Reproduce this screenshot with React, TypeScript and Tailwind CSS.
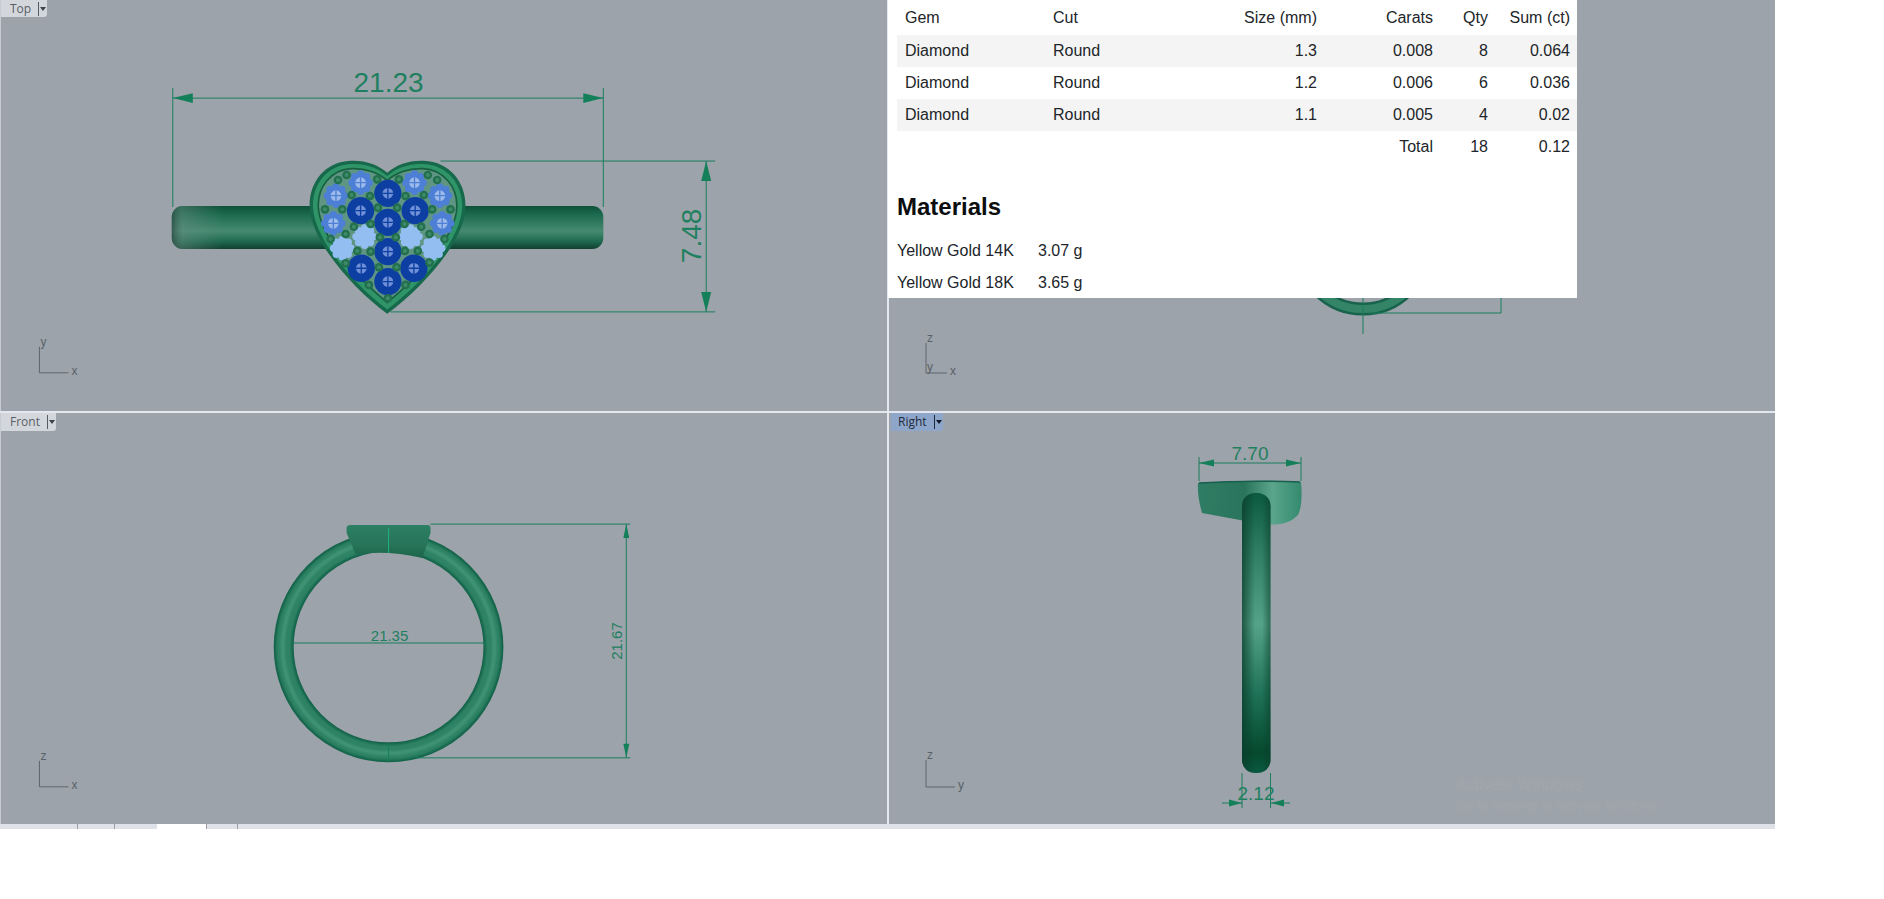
const DIM = '#1a7d5c';

const DARK_GEMS = [[292, 160], [210, 212], [374, 212], [292, 247], [292, 335], [212, 385], [370, 385], [292, 425]];
const MID_GEMS = [[210, 128], [372, 128], [136, 167], [448, 167], [128, 250], [455, 250]];
const LIGHT_GEMS = [[222, 290], [360, 290], [155, 325], [428, 325]];
const BEADS = [
    [142, 120], [168, 105], [260, 118], [325, 118], [412, 105], [440, 120], [183, 165], [238, 168], [345, 168], [400, 165],
    [103, 208], [155, 208], [262, 203], [320, 203], [425, 208], [480, 208], [190, 260], [240, 252], [342, 252], [392, 260],
    [120, 297], [165, 282], [417, 282], [462, 297], [268, 292], [316, 292], [200, 333], [240, 335], [343, 333], [382, 333],
    [165, 370], [417, 368], [265, 382], [318, 382], [235, 435], [345, 435], [292, 475]
];
const BUMPS = [[26, 0], [18, 18], [0, 26], [-18, 18], [-26, 0], [-18, -18], [0, -26], [18, -18]];

const GEMS = [
    { gem: 'Diamond', cut: 'Round', size: '1.3', carats: '0.008', qty: '8', sum: '0.064' },
    { gem: 'Diamond', cut: 'Round', size: '1.2', carats: '0.006', qty: '6', sum: '0.036' },
    { gem: 'Diamond', cut: 'Round', size: '1.1', carats: '0.005', qty: '4', sum: '0.02' }
];

function Line({ x1, y1, x2, y2 }: { x1: number; y1: number; x2: number; y2: number }) {
    return <line x1={x1} y1={y1} x2={x2} y2={y2} stroke={DIM} strokeWidth={1} />;
}

// arrow with its tip on (x, y), pointing along (dx, dy)
function Arrow({ x, y, dx, dy, len, half }: { x: number; y: number; dx: number; dy: number; len: number; half: number }) {
    const bx = x - dx * len;
    const by = y - dy * len;
    const pts = `${x},${y} ${bx - dy * half},${by - dx * half} ${bx + dy * half},${by + dx * half}`;
    return <polygon points={pts} fill="#14805a" />;
}

function Axis({ x, y, h, w, v, u, extra }: { x: number; y: number; h: number; w: number; v: string; u: string; extra?: string }) {
    return (
        <g>
            <path d={`M${x} ${y - h}V${y}H${x + w}`} fill="none" stroke="#5f666c" strokeWidth={1} />
            <text x={x + 1} y={y - h - 1} fontSize={12} fill="#5a6168">{v}</text>
            <text x={x + w + 3} y={y + 2} fontSize={12} fill="#5a6168">{u}</text>
            {extra && <text x={x + 1} y={y - 2} fontSize={12} fill="#5a6168">{extra}</text>}
        </g>
    );
}

function Gem({ x, y, fill, mark, scallop }: { x: number; y: number; fill: string; mark?: string; scallop?: boolean }) {
    return (
        <g>
            <circle cx={x} cy={y} r={scallop ? 30 : 41} fill={fill} />
            {scallop && BUMPS.map(([dx, dy]) => <circle key={`${dx}/${dy}`} cx={x + dx} cy={y + dy} r={11} fill={fill} />)}
            {mark && <circle cx={x} cy={y} r={16} fill={mark} />}
            {mark && <path d={`M${x - 16} ${y}H${x + 16}M${x} ${y - 16}V${y + 16}`} stroke={fill} strokeWidth={4} />}
        </g>
    );
}

function Heart() {
    const outer = 'M290 98C265 75 225 60 180 62C100 65 55 130 57 200C60 300 180 440 290 522C400 440 525 300 525 200C527 130 480 65 400 62C355 60 315 75 290 98Z';
    const middle = 'M290 108C265 85 225 70 181 72C108 75 65 135 67 200C70 295 185 430 290 509C395 430 515 295 515 200C517 135 472 75 399 72C355 70 315 85 290 108Z';
    const inner = 'M290 122C265 99 225 84 183 86C120 89 81 142 83 200C86 285 195 410 290 488C385 410 499 285 499 200C501 142 460 89 397 86C355 84 315 99 290 122Z';
    return (
        <g transform="translate(290 140) scale(0.3333)">
            <path d={outer} fill="#16694a" />
            <path d={middle} fill="#2f9468" />
            <path d={inner} fill="#5f9583" stroke="#17603f" strokeWidth={5} />
            {MID_GEMS.map(([x, y]) => <Gem key={`${x}-${y}`} x={x} y={y} fill="#4d7fd6" mark="#9dbbea" scallop />)}
            {LIGHT_GEMS.map(([x, y]) => <Gem key={`${x}-${y}`} x={x} y={y} fill="#93bef2" scallop />)}
            {DARK_GEMS.map(([x, y]) => <Gem key={`${x}-${y}`} x={x} y={y} fill="#0d3fa3" mark="#7090d8" />)}
            {BEADS.map(([x, y]) => (
                <g key={`${x}-${y}`}>
                    <circle cx={x} cy={y} r={13} fill="#22704e" />
                    <circle cx={x} cy={y} r={6} fill="#3f8a68" />
                </g>
            ))}
        </g>
    );
}

function Defs() {
    return (
        <svg width="0" height="0" className="absolute">
            <defs>
                <linearGradient id="band" x1="0" y1="0" x2="0" y2="1">
                    <stop offset="0" stopColor="#0c5138" />
                    <stop offset="0.2" stopColor="#1c6a4f" />
                    <stop offset="0.58" stopColor="#458a71" />
                    <stop offset="0.82" stopColor="#1f6a50" />
                    <stop offset="1" stopColor="#0f4030" />
                </linearGradient>
                <linearGradient id="bandEnd" x1="0" y1="0" x2="1" y2="0">
                    <stop offset="0" stopColor="#2f4f46" stopOpacity="0.8" />
                    <stop offset="0.025" stopColor="#6b8f84" stopOpacity="0.45" />
                    <stop offset="0.12" stopColor="#6b8f84" stopOpacity="0" />
                    <stop offset="1" stopColor="#6b8f84" stopOpacity="0" />
                </linearGradient>
                <linearGradient id="shank" x1="0" y1="0" x2="1" y2="0">
                    <stop offset="0" stopColor="#0a3d2c" stopOpacity="0.75" />
                    <stop offset="0.45" stopColor="#0a3d2c" stopOpacity="0" />
                    <stop offset="0.7" stopColor="#0a3d2c" stopOpacity="0" />
                    <stop offset="1" stopColor="#0a3d2c" stopOpacity="0.55" />
                </linearGradient>
                <linearGradient id="shankV" x1="0" y1="0" x2="0" y2="1">
                    <stop offset="0" stopColor="#0b5a40" />
                    <stop offset="0.2" stopColor="#2e7c62" />
                    <stop offset="0.47" stopColor="#55a388" />
                    <stop offset="0.72" stopColor="#1e7257" />
                    <stop offset="0.93" stopColor="#05492e" />
                    <stop offset="1" stopColor="#0a5a42" />
                </linearGradient>
                <linearGradient id="head" x1="0" y1="0" x2="1" y2="0">
                    <stop offset="0" stopColor="#2f7d64" />
                    <stop offset="0.45" stopColor="#2a745c" />
                    <stop offset="0.72" stopColor="#5aa58c" />
                    <stop offset="1" stopColor="#338a6e" />
                </linearGradient>
                <linearGradient id="seat" x1="0" y1="0" x2="0" y2="1">
                    <stop offset="0" stopColor="#2c7f62" />
                    <stop offset="0.6" stopColor="#27745a" />
                    <stop offset="1" stopColor="#1c6549" />
                </linearGradient>
                <filter id="soft" x="-10%" y="-10%" width="120%" height="120%">
                    <feGaussianBlur stdDeviation="1.1" />
                </filter>
            </defs>
        </svg>
    );
}

function TopView() {
    return (
        <svg viewBox="0 0 887 411" className="w-full h-full font-['Liberation_Sans']">
            <rect x={171} y={206} width={432} height={43} rx={11} fill="url(#band)" />
            <rect x={171} y={206} width={432} height={43} rx={11} fill="url(#bandEnd)" />
            <Line x1={172} y1={88} x2={172} y2={207} />
            <Line x1={603} y1={88} x2={603} y2={207} />
            <Line x1={172} y1={98} x2={603} y2={98} />
            <Arrow x={172} y={98} dx={-1} dy={0} len={20} half={5} />
            <Arrow x={603} y={98} dx={1} dy={0} len={20} half={5} />
            <text x={388} y={92} textAnchor="middle" fontSize={28} fill="#1f8060">21.23</text>
            <Line x1={440} y1={161} x2={715} y2={161} />
            <Line x1={390} y1={312} x2={715} y2={312} />
            <Line x1={706} y1={161} x2={706} y2={312} />
            <Arrow x={706} y={161} dx={0} dy={-1} len={20} half={5} />
            <Arrow x={706} y={312} dx={0} dy={1} len={20} half={5} />
            <text transform="translate(701 236) rotate(-90)" textAnchor="middle" fontSize={28} fill="#1f8060">7.48</text>
            <Heart />
            <Axis x={38.5} y={373} h={26} w={29} v="y" u="x" />
        </svg>
    );
}

function TopRightView() {
    return (
        <svg viewBox="889 0 886 411" className="w-full h-full font-['Liberation_Sans']">
            <circle cx={1363} cy={246} r={63} fill="none" stroke="#17634b" strokeWidth={13} />
            <circle cx={1363} cy={246} r={63} fill="none" stroke="#348468" strokeWidth={8} />
            <path d="M1363 298V334M1370 313H1501V298" fill="none" stroke={DIM} strokeWidth={1} />
            <Axis x={926} y={373} h={30} w={21} v="z" u="x" extra="y" />
        </svg>
    );
}

function FrontView() {
    return (
        <svg viewBox="0 413 887 411" className="w-full h-full font-['Liberation_Sans']">
            <ellipse cx={388} cy={647} rx={105} ry={105.5} fill="none" stroke="#14644a" strokeWidth={20} />
            <ellipse cx={388} cy={647} rx={105} ry={105.5} fill="none" stroke="#2f8365" strokeWidth={15} filter="url(#soft)" />
            <ellipse cx={388} cy={647} rx={106} ry={106.5} fill="none" stroke="#55a486" strokeWidth={4} opacity={0.5} filter="url(#soft)" />
            <path d="M346 528Q346 525 350 525H427Q430 525 430 528V533L422 558Q388 550 355 554L346 533Z" fill="url(#seat)" />
            <path d="M388 528V553" stroke="#1fb27d" strokeWidth={1} />
            <path d="M388 745V762" stroke="#14805a" strokeWidth={1} />
            <Line x1={430} y1={524} x2={630} y2={524} />
            <Line x1={415} y1={758} x2={630} y2={758} />
            <Line x1={626} y1={524} x2={626} y2={758} />
            <Arrow x={626} y={524} dx={0} dy={-1} len={14} half={3} />
            <Arrow x={626} y={758} dx={0} dy={1} len={14} half={3} />
            <text transform="translate(622 641) rotate(-90)" textAnchor="middle" fontSize={15} fill="#1f8060">21.67</text>
            <Line x1={293} y1={643} x2={485} y2={643} />
            <text x={389} y={641} textAnchor="middle" fontSize={15} fill="#1f8060">21.35</text>
            <Axis x={38.5} y={787} h={26} w={29} v="z" u="x" />
        </svg>
    );
}

function RightView() {
    return (
        <svg viewBox="889 413 886 411" className="w-full h-full font-['Liberation_Sans']">
            <path d="M1198 483Q1250 479 1301 482Q1303 505 1298 515Q1290 523 1280 524Q1265 526 1240 520L1202 513Q1197 495 1198 483Z" fill="url(#head)" />
            <path d="M1199 483Q1250 480 1300 482" fill="none" stroke="#17604f" strokeWidth={1.5} />
            <rect x={1242} y={493} width={28.5} height={280} rx={13} fill="url(#shankV)" />
            <rect x={1242} y={493} width={28.5} height={280} rx={13} fill="url(#shank)" />
            <path d="M1199 457V481M1301 457V481M1242 773V808M1270.5 773V808" stroke={DIM} strokeWidth={1} />
            <Line x1={1199} y1={463} x2={1301} y2={463} />
            <Arrow x={1199} y={463} dx={-1} dy={0} len={15} half={3.5} />
            <Arrow x={1301} y={463} dx={1} dy={0} len={15} half={3.5} />
            <text x={1250} y={460} textAnchor="middle" fontSize={19} fill="#1f8060">7.70</text>
            <Line x1={1222} y1={803} x2={1242} y2={803} />
            <Line x1={1271} y1={803} x2={1290} y2={803} />
            <Arrow x={1242} y={803} dx={1} dy={0} len={13} half={3.5} />
            <Arrow x={1271} y={803} dx={-1} dy={0} len={13} half={3.5} />
            <text x={1256} y={800} textAnchor="middle" fontSize={19} fill="#1f8060">2.12</text>
            <Axis x={926} y={787} h={27} w={29} v="z" u="y" />
            <text x={1456} y={790} fontSize={16} fill="#a2a7ac">Activate Windows</text>
            <text x={1456} y={810} fontSize={13} fill="#a2a7ac">Go to Settings to activate Windows.</text>
        </svg>
    );
}

function ViewTab({ label, active, className }: { label: string; active?: boolean; className: string }) {
    return (
        <div
            className={`absolute flex items-center font-['Open_Sans'] text-[12px] rounded-br-[3px] pr-px ${className} ${active ? 'bg-[#8fa6cb] text-[#1d2a3c]' : 'bg-[#d3d7dc] text-[#5a5f66]'}`}
        >
            <span className="pr-[7px] leading-none">{label}</span>
            <span className={`shrink-0 w-px h-[14px] ${active ? 'bg-[#1d2a3c]' : 'bg-[#555b62]'}`} />
            <span className={`shrink-0 ml-[1px] w-0 h-0 border-x-[3.5px] border-x-transparent border-t-[4px] ${active ? 'border-t-[#10192a]' : 'border-t-[#3c4148]'}`} />
        </div>
    );
}

function ReportPanel() {
    return (
        <div className="absolute left-[888px] top-0 w-[689px] h-[298px] bg-white pl-[9px] text-[16px] text-[#212529] font-['Liberation_Sans'] overflow-hidden">
            <table className="w-[680px] table-fixed border-collapse">
                <thead>
                    <tr className="h-[35px]">
                        <th className="w-[148px] pl-2 pt-px font-normal text-left">Gem</th>
                        <th className="w-[180px] pl-2 pt-px font-normal text-left">Cut</th>
                        <th className="w-[100px] pr-2 pt-px font-normal text-right">Size (mm)</th>
                        <th className="w-[116px] pr-2 pt-px font-normal text-right">Carats</th>
                        <th className="w-[55px] pr-2 pt-px font-normal text-right">Qty</th>
                        <th className="w-[81px] pr-[7px] pt-px font-normal text-right">Sum (ct)</th>
                    </tr>
                </thead>
                <tbody>
                    {GEMS.map((g) => (
                        <tr key={g.size} className="h-[32px] odd:bg-[#f4f4f4]">
                            <td className="pl-2">{g.gem}</td>
                            <td className="pl-2">{g.cut}</td>
                            <td className="pr-2 text-right">{g.size}</td>
                            <td className="pr-2 text-right">{g.carats}</td>
                            <td className="pr-2 text-right">{g.qty}</td>
                            <td className="pr-[7px] text-right">{g.sum}</td>
                        </tr>
                    ))}
                    <tr className="h-[32px]">
                        <td colSpan={3} />
                        <td className="pr-2 text-right">Total</td>
                        <td className="pr-2 text-right">18</td>
                        <td className="pr-[7px] text-right">0.12</td>
                    </tr>
                </tbody>
            </table>
            <h3 className="mt-[29px] mb-[14px] text-[24px] leading-[29px] font-bold text-[#0b0d0f]">Materials</h3>
            <table className="border-collapse">
                <tbody>
                    <tr className="h-[32px]">
                        <td className="w-[141px]">Yellow Gold 14K</td>
                        <td>3.07 g</td>
                    </tr>
                    <tr className="h-[32px]">
                        <td className="w-[141px]">Yellow Gold 18K</td>
                        <td>3.65 g</td>
                    </tr>
                </tbody>
            </table>
        </div>
    );
}

export default function App() {
    return (
        <div className="relative w-[1884px] h-[899px] bg-white overflow-hidden">
            <Defs />
            <div className="w-[1775px] grid grid-cols-[887px_886px] grid-rows-[411px_411px] gap-[2px] bg-[#e4e7ed]">
                <div className="relative bg-[#9ca3aa] border-l border-l-[#c8ccd2]">
                    <TopView />
                    <ViewTab label="Top" className="top-0 left-0 h-[17px] pl-[9px]" />
                </div>
                <div className="bg-[#9ca3aa]">
                    <TopRightView />
                </div>
                <div className="relative bg-[#9ca3aa] border-l border-l-[#c8ccd2]">
                    <FrontView />
                    <ViewTab label="Front" className="top-0 left-0 h-[18px] pl-[9px]" />
                </div>
                <div className="relative bg-[#9ca3aa]">
                    <RightView />
                    <ViewTab label="Right" active className="top-0 left-[2px] h-[18px] pl-[7px]" />
                </div>
            </div>
            <div className="w-[1775px] h-[5px] flex bg-[#dfe1e8]">
                <div className="w-[78px] border-r border-r-[#9a9da3]" />
                <div className="w-[37px] border-r border-r-[#9a9da3]" />
                <div className="w-[42px]" />
                <div className="w-[50px] bg-white border-r border-r-[#9a9da3]" />
                <div className="w-[31px] border-r border-r-[#9a9da3]" />
            </div>
            <ReportPanel />
        </div>
    );
}
